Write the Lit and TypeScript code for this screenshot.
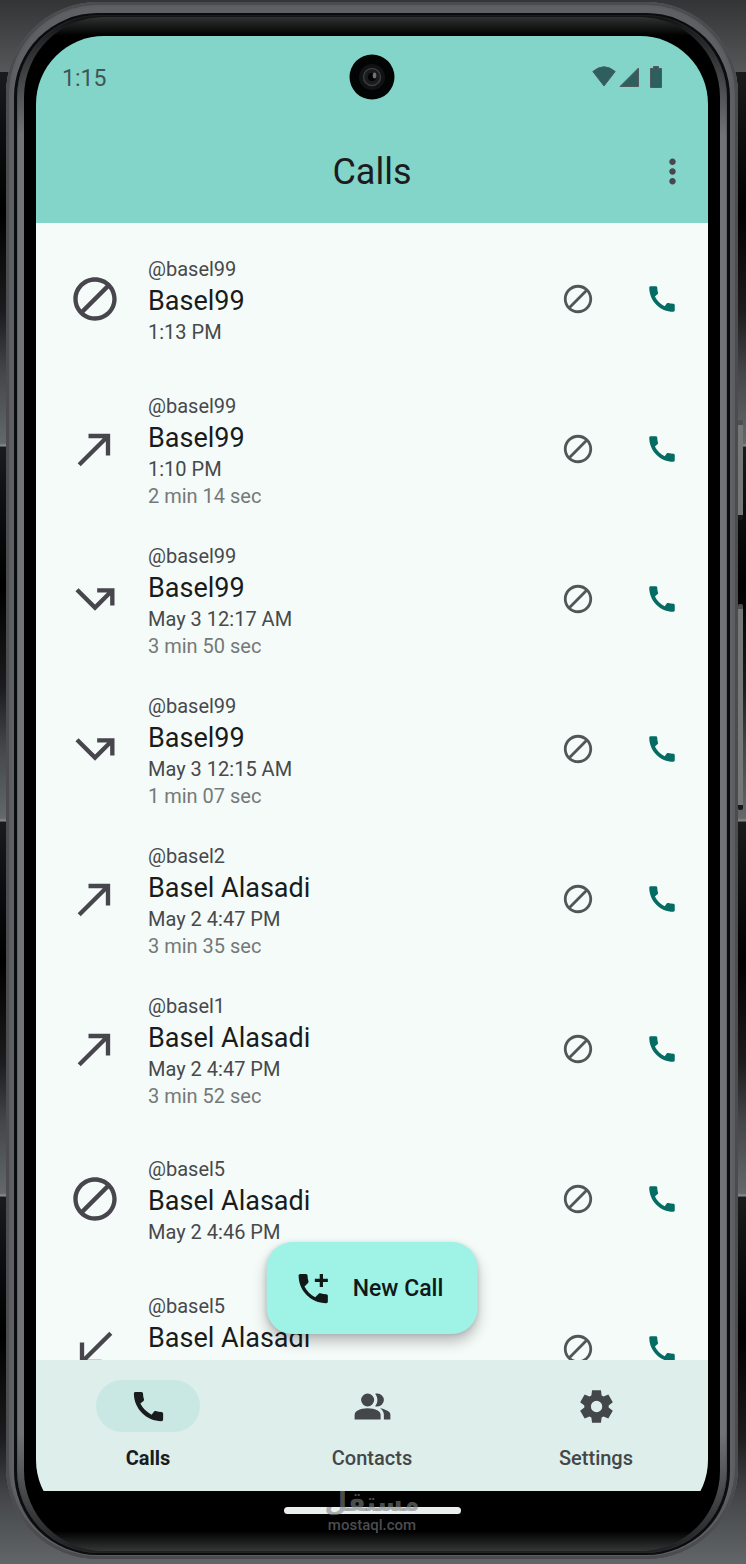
import { LitElement, html, css, svg } from "lit";
import { customElement, property, state } from "lit/decorators.js";
import { classMap } from "lit/directives/class-map.js";

const ICONS: Record<string, string> = {
  block:
    "M12 2C6.48 2 2 6.48 2 12s4.48 10 10 10 10-4.48 10-10S17.52 2 12 2zM4 12c0-4.42 3.58-8 8-8 1.85 0 3.55.63 4.9 1.69L5.69 16.9C4.63 15.55 4 13.85 4 12zm8 8c-1.85 0-3.55-.63-4.9-1.69L18.31 7.1C19.37 8.45 20 10.15 20 12c0 4.42-3.58 8-8 8z",
  made: "M9 5v2h6.59L4 18.59 5.41 20 17 8.41V15h2V5z",
  missed: "M3 8.41l9 9 7-7V15h2V7h-8v2h4.59L12 14.59 4.41 7 3 8.41z",
  received: "M20 5.41L18.59 4 7 15.59V9H5v10h10v-2H8.41z",
  call: "M20.01 15.38c-1.23 0-2.42-.2-3.53-.56-.35-.12-.74-.03-1.01.24l-1.57 1.97c-2.83-1.35-5.48-3.9-6.89-6.83l1.95-1.66c.27-.28.35-.67.24-1.02-.37-1.11-.56-2.3-.56-3.53 0-.54-.45-.99-.99-.99H4.19C3.65 3 3 3.24 3 3.99 3 13.28 10.73 21 20.01 21c.71 0 .99-.63.99-1.18v-3.45c0-.54-.45-.99-.99-.99z",
  addCall:
    "M20 15.5c-1.25 0-2.45-.2-3.57-.57-.35-.11-.74-.03-1.02.24l-2.2 2.2c-2.83-1.44-5.15-3.75-6.59-6.59l2.2-2.21c.28-.26.36-.65.25-1C8.7 6.45 8.5 5.25 8.5 4c0-.55-.45-1-1-1H4c-.55 0-1 .45-1 1 0 9.39 7.61 17 17 17 .55 0 1-.45 1-1v-3.5c0-.55-.45-1-1-1zM21 6h-3V3h-2v3h-3v2h3v3h2V8h3V6z",
  more: "M12 8c1.1 0 2-.9 2-2s-.9-2-2-2-2 .9-2 2 .9 2 2 2zm0 2c-1.1 0-2 .9-2 2s.9 2 2 2 2-.9 2-2-.9-2-2-2zm0 6c-1.1 0-2 .9-2 2s.9 2 2 2 2-.9 2-2-.9-2-2-2z",
  group:
    "M1 20v-2.8q0-.85.44-1.56.44-.71 1.16-1.09 1.55-.77 3.15-1.16Q7.35 13 9 13t3.25.39q1.6.39 3.15 1.16.73.37 1.16 1.09.44.71.44 1.56V20H1zm18 0v-3q0-1.1-.61-2.11-.61-1.01-1.74-1.74 1.28.15 2.4.51 1.13.36 2.1.89.9.5 1.38 1.11.47.61.47 1.34V20h-4zM9 12q-1.65 0-2.83-1.18Q5 9.65 5 8t1.17-2.83Q7.35 4 9 4t2.83 1.17Q13 6.35 13 8t-1.17 2.82Q10.65 12 9 12zm10-4q0 1.65-1.17 2.82Q16.65 12 15 12q-.28 0-.7-.06-.43-.06-.7-.14.68-.8 1.04-1.77Q15 9.05 15 8q0-1.05-.36-2.02-.36-.98-1.04-1.78.35-.12.7-.16.35-.04.7-.04 1.65 0 2.83 1.17Q19 6.35 19 8z",
  settings:
    "m9.25 22-.4-3.2q-.325-.125-.612-.3t-.563-.375L4.7 19.375l-2.75-4.75 2.575-1.95Q4.5 12.5 4.5 12.338v-.675q0-.163.025-.338L1.95 9.375l2.75-4.75 2.975 1.25q.275-.2.575-.375t.6-.3l.4-3.2h5.5l.4 3.2q.325.125.613.3t.562.375l2.975-1.25 2.75 4.75-2.575 1.95q.025.175.025.338v.674q0 .163-.05.338l2.575 1.95-2.75 4.75-2.95-1.25q-.275.2-.575.375t-.6.3l-.4 3.2zm2.8-6.5q1.45 0 2.475-1.025T15.55 12t-1.025-2.475T12.05 8.5q-1.475 0-2.488 1.025T8.55 12t1.013 2.475T12.05 15.5",
};

const icon = (name: string) =>
  html`<svg class="icon" viewBox="0 0 24 24" aria-hidden="true">${svg`<path d=${ICONS[name]}></path>`}</svg>`;

interface Call {
  kind: string;
  handle: string;
  name: string;
  time?: string;
  duration?: string;
}

const CALLS: Call[] = [
  { kind: "block", handle: "@basel99", name: "Basel99", time: "1:13 PM" },
  { kind: "made", handle: "@basel99", name: "Basel99", time: "1:10 PM", duration: "2 min 14 sec" },
  { kind: "missed", handle: "@basel99", name: "Basel99", time: "May 3 12:17 AM", duration: "3 min 50 sec" },
  { kind: "missed", handle: "@basel99", name: "Basel99", time: "May 3 12:15 AM", duration: "1 min 07 sec" },
  { kind: "made", handle: "@basel2", name: "Basel Alasadi", time: "May 2 4:47 PM", duration: "3 min 35 sec" },
  { kind: "made", handle: "@basel1", name: "Basel Alasadi", time: "May 2 4:47 PM", duration: "3 min 52 sec" },
  { kind: "block", handle: "@basel5", name: "Basel Alasadi", time: "May 2 4:46 PM" },
  { kind: "received", handle: "@basel5", name: "Basel Alasadi" },
];

@customElement("call-row")
class CallRow extends LitElement {
  @property({ attribute: false }) call!: Call;

  static styles = css`
    :host {
      display: flex;
      align-items: center;
      box-sizing: border-box;
      height: 150px;
      padding: 0 4px 0 33px;
    }
    .icon {
      display: block;
      width: 34px;
      height: 34px;
      fill: currentColor;
    }
    .kind {
      color: #47464c;
      margin-right: 27px;
    }
    .kind .icon {
      width: 52px;
      height: 52px;
    }
    .details {
      flex: 1;
      min-width: 0;
      padding-top: 4px;
      font-size: 20px;
      line-height: 27px;
      color: #47494b;
    }
    .pending {
      min-height: 117px;
    }
    .name {
      font-size: 27px;
      line-height: 36px;
      color: #191c1c;
    }
    .duration {
      color: #747978;
    }
    .action {
      display: grid;
      place-items: center;
      width: 84px;
      height: 84px;
      padding: 0;
      border: 0;
      background: none;
      color: #535658;
    }
    .dial {
      color: #046c63;
    }
  `;

  render() {
    const c = this.call;
    return html`
      <div class="kind">${icon(c.kind)}</div>
      <div class=${classMap({ details: true, pending: !c.time })}>
        <div>${c.handle}</div>
        <div class="name">${c.name}</div>
        ${c.time ? html`<div>${c.time}</div>` : null}
        ${c.duration ? html`<div class="duration">${c.duration}</div>` : null}
      </div>
      <button class="action" aria-label="Block">${icon("block")}</button>
      <button class="action dial" aria-label="Call">${icon("call")}</button>
    `;
  }
}

@customElement("app-root")
class AppRoot extends LitElement {
  @state() tab = "Calls";

  static styles = css`
    :host {
      display: block;
      box-sizing: border-box;
      height: 100vh;
      padding: 2px 8px 5px 6px;
      overflow: hidden;
      font-family: Roboto, "Liberation Sans", sans-serif;
      background: repeating-linear-gradient(
          #1a1b1d 0,
          #0d0e10 60px,
          #000 140px,
          #1c1c1e 240px,
          #44464a 300px,
          #64686a 371px,
          #8b8f90 374px,
          #1a1b1d 375px
        )
        0 72px no-repeat,
        linear-gradient(#333436, #565759 72px);
    }
    .icon {
      display: block;
      width: 39px;
      height: 39px;
      fill: currentColor;
    }
    .phone,
    .groove,
    .rail,
    .bezel,
    .screen {
      box-sizing: border-box;
      height: 100%;
    }
    .phone {
      position: relative;
      padding: 11px 8px 4px 8px;
      border-radius: 92px;
      background: linear-gradient(#5f6063, #606164 96%, #242527);
      box-shadow: inset 0 0 0 3px #4c4c4f, inset 0 0 0 5px #5c5d60;
    }
    .groove {
      padding: 2px 3px;
      border-radius: 84px;
      background: #0b0c0d;
    }
    .rail {
      padding: 2px 7px;
      border-radius: 82px;
      background: linear-gradient(#101112, #717376 120px, #717376 calc(100% - 120px), #1d1e1f);
      box-shadow: inset 0 0 2px #3a3b3d;
    }
    .bezel {
      padding: 19px 12px 23px;
      border-radius: 80px;
      background: linear-gradient(#303132, #000 19px, #000 calc(100% - 20px), #353637);
    }
    .screen {
      position: relative;
      display: flex;
      flex-direction: column;
      overflow: hidden;
      border-radius: 68px;
      background: #000;
    }
    .key {
      position: absolute;
      right: -5px;
      width: 5px;
      border-radius: 2px;
      background: #737879;
      border-bottom: 5px solid #17181a;
      border-top: 5px solid #4c4e50;
      box-sizing: border-box;
    }
    .power {
      top: 418px;
      height: 100px;
    }
    .volume {
      top: 602px;
      height: 206px;
    }
    .top {
      background: #83d5ca;
    }
    .status {
      display: flex;
      align-items: center;
      justify-content: space-between;
      height: 84px;
      padding: 0 45px 0 26px;
      font-size: 23px;
      color: #3f5557;
    }
    .signals {
      display: block;
      width: 71px;
      height: 22px;
      margin-bottom: 3px;
      fill: #2c5f5d;
      stroke: #50595c;
    }
    .camera {
      position: absolute;
      top: 18px;
      left: 50%;
      width: 46px;
      height: 46px;
      margin-left: -23px;
    }
    .bar {
      display: grid;
      grid-template-columns: 72px 1fr 72px;
      align-items: center;
      height: 103px;
    }
    .title {
      grid-column: 2;
      margin: 0;
      font-size: 36px;
      font-weight: 400;
      text-align: center;
      color: #1d1b1e;
    }
    .more {
      display: grid;
      place-items: center;
      height: 72px;
      padding: 0;
      border: 0;
      background: none;
      color: #47464c;
    }
    .main {
      position: relative;
      flex: 1;
      min-height: 0;
      padding-top: 1px;
      overflow: hidden;
      background: #f5fbf9;
    }
    .fab {
      position: absolute;
      bottom: 26px;
      left: 50%;
      transform: translateX(-50%);
      display: flex;
      align-items: center;
      gap: 20px;
      height: 92px;
      padding: 0 34px 0 27px;
      border: 0;
      border-radius: 26px;
      background: #9ef2e6;
      box-shadow: 0 8px 14px rgba(0, 0, 0, 0.24), 0 1px 5px rgba(0, 0, 0, 0.12);
      font: 500 23px Roboto, sans-serif;
      white-space: nowrap;
      color: #111818;
    }
    .tabs {
      display: grid;
      grid-template-columns: repeat(3, 1fr);
      flex: none;
      height: 131px;
      background: #deeeeb;
    }
    .tab {
      display: flex;
      flex-direction: column;
      align-items: center;
      gap: 13px;
      padding: 20px 0 0;
      border: 0;
      background: none;
      font: 500 20px/26px Roboto, sans-serif;
      color: #434749;
    }
    .pill {
      display: grid;
      place-items: center;
      width: 104px;
      height: 52px;
      border-radius: 26px;
    }
    .tab.active {
      font-weight: 700;
      color: #191c1c;
    }
    .tab.active .pill {
      background: #cae8e3;
    }
    .gesture {
      display: flex;
      flex: none;
      justify-content: center;
      height: 37px;
      padding-top: 16px;
      box-sizing: border-box;
    }
    .handle {
      width: 177px;
      height: 7px;
      border-radius: 4px;
      background: #e9efed;
    }
    .watermark {
      position: absolute;
      bottom: 26px;
      left: 0;
      right: 0;
      display: flex;
      flex-direction: column;
      align-items: center;
      font: 500 15px/16px Roboto, sans-serif;
      color: rgba(125, 129, 132, 0.62);
      pointer-events: none;
    }
    .brand {
      font: 700 26px/30px "DejaVu Sans", sans-serif;
    }
  `;

  render() {
    const tabs = [
      ["Calls", "call"],
      ["Contacts", "group"],
      ["Settings", "settings"],
    ];
    return html`
      <div class="phone">
        <span class="key power"></span>
        <span class="key volume"></span>
        <div class="groove"><div class="rail"><div class="bezel">
          <div class="screen">
            <header class="top">
              <div class="status">
                <span>1:15</span>
                <svg class="signals" viewBox="0 0 71 22" aria-hidden="true">
                  <path d="M.8 5.5Q12 -4 23.2 5.5L12 20z"></path>
                  <path d="M28 20.500L46.500 2v18.500z"></path>
                  <path d="M61.500 .5h5v2h3v19h-11v-19h3z"></path>
                </svg>
              </div>
              <div class="bar">
                <h1 class="title">Calls</h1>
                <button class="more" aria-label="More options">${icon("more")}</button>
              </div>
              <svg class="camera" viewBox="0 0 46 46" aria-hidden="true">
                <circle cx="23" cy="23" r="22.500" fill="#030404"></circle>
                <circle cx="23" cy="23" r="13" fill="#111213"></circle>
                <circle cx="23" cy="23" r="8.500" fill="#1a1b1c" stroke="#3b3c3d" stroke-width="1.500"></circle>
                <circle cx="23" cy="23" r="4" fill="#020202"></circle>
                <ellipse cx="25.500" cy="21.500" rx="1.800" ry="3" fill="#707274"></ellipse>
              </svg>
            </header>
            <main class="main">
              ${CALLS.map((c) => html`<call-row .call=${c}></call-row>`)}
              <button class="fab">${icon("addCall")}<span>New Call</span></button>
            </main>
            <nav class="tabs">
              ${tabs.map(
                ([label, glyph]) => html`<button
                  class=${classMap({ tab: true, active: this.tab === label })}
                  @click=${() => (this.tab = label)}
                >
                  <span class="pill">${icon(glyph)}</span><span>${label}</span>
                </button>`
              )}
            </nav>
            <div class="gesture"><div class="handle"></div></div>
          </div>
        </div></div></div>
        <div class="watermark"><span class="brand" lang="ar">مستقل</span><span>mostaql.com</span></div>
      </div>
    `;
  }
}
